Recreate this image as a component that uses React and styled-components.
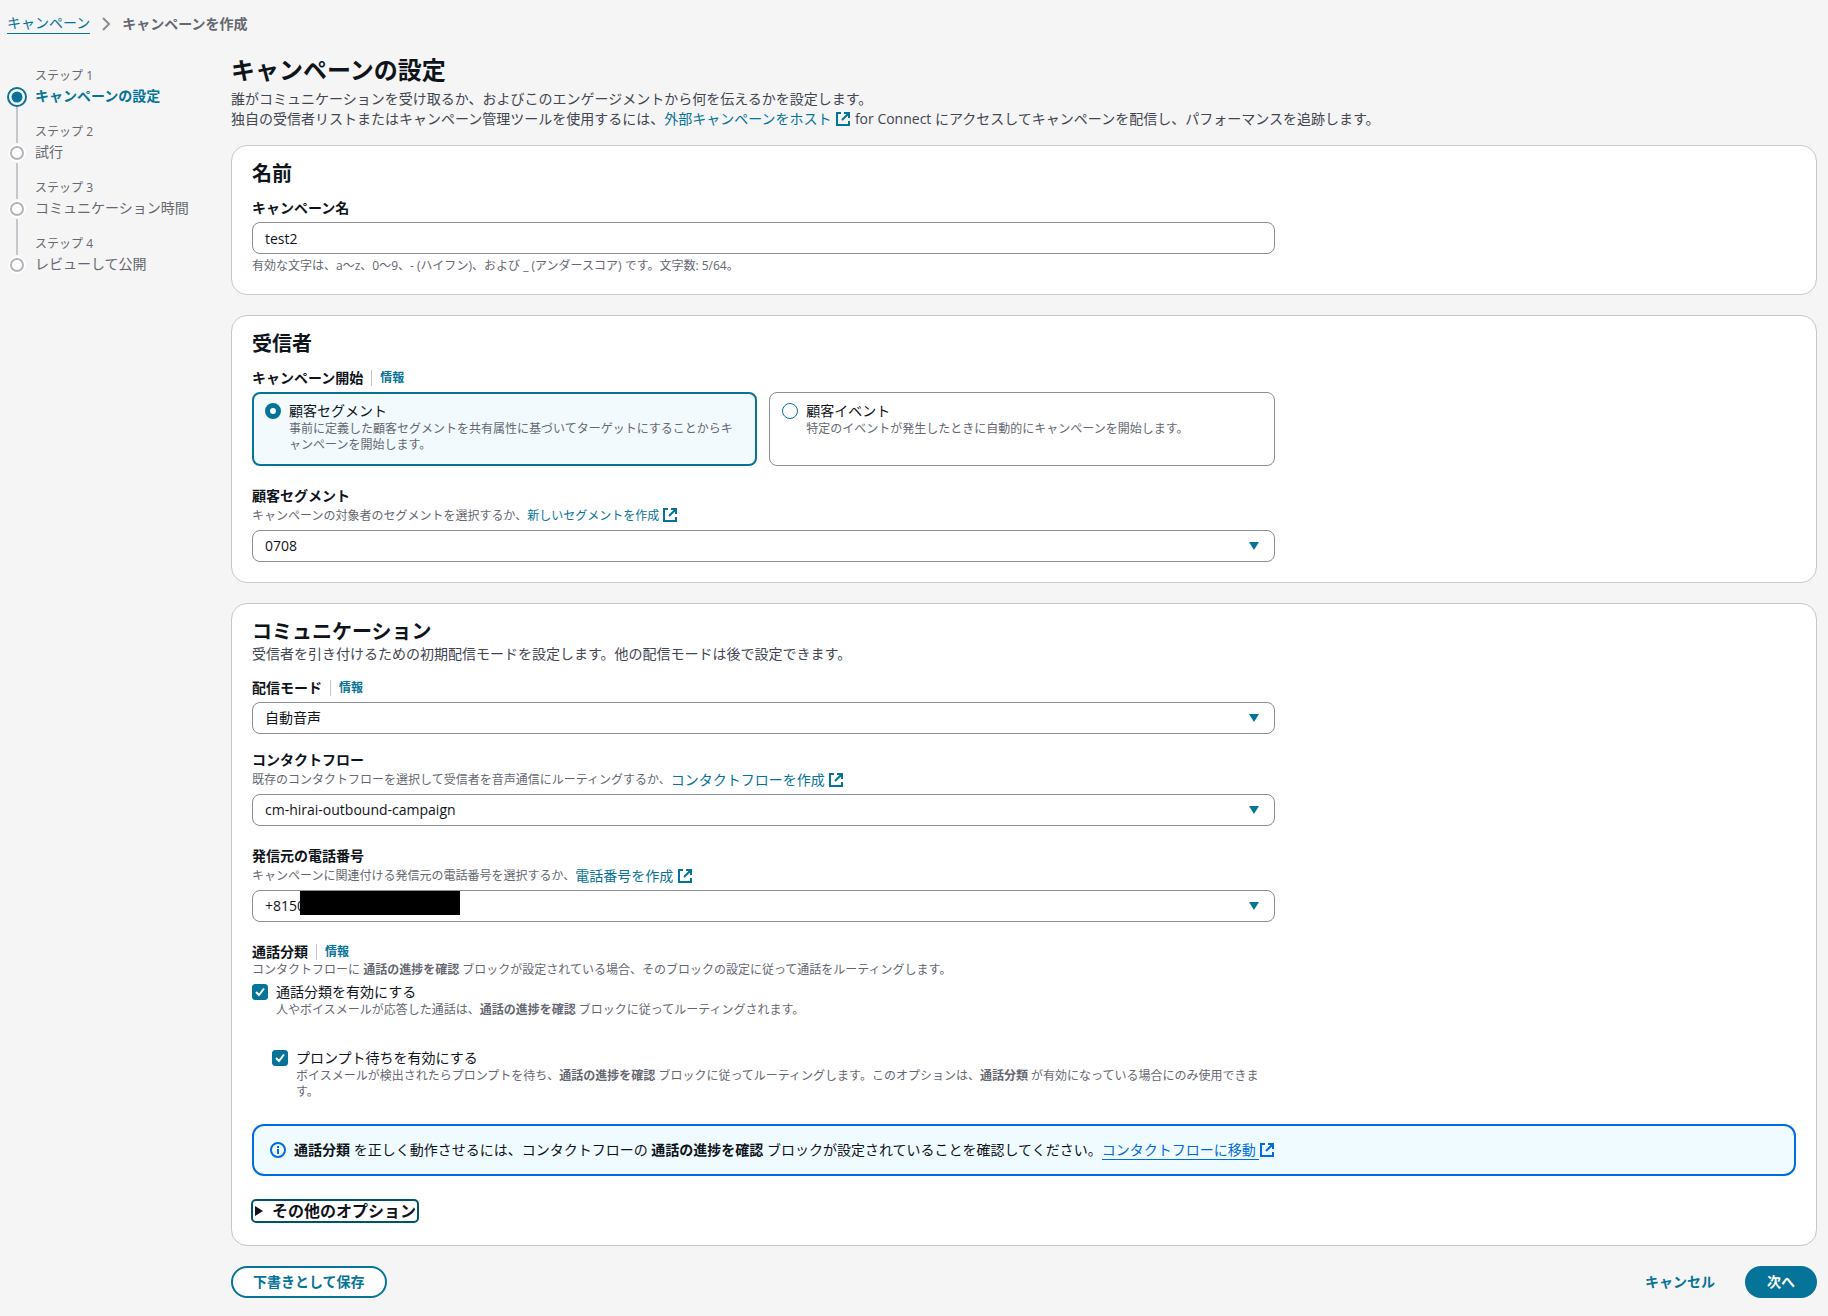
import React, { useState } from 'react';
import styled, { createGlobalStyle, css } from 'styled-components';

const teal = '#067398';
const blue = '#006ce0';
const dark = '#0f141a';
const body = '#424650';
const grey = '#656871';
const line = '#c6c6cd';

const GlobalStyle = createGlobalStyle`
    * {
        box-sizing: border-box;
    }
    body {
        margin: 0;
        background: #f5f5f5;
        color: ${dark};
        font-family: 'Open Sans', 'Noto Sans CJK JP', sans-serif;
        font-size: 14px;
        line-height: 20px;
    }
    button, input, select {
        font: inherit;
        color: inherit;
    }
    h1, h2, p, ol, fieldset {
        margin: 0;
        padding: 0;
        border: 0;
    }
`
const Page = styled.div`
    padding: 13px 11px 17px 7px;
`
const Breadcrumbs = styled.nav`
    display: flex;
    align-items: center;
    gap: 8px;
    color: ${grey};
    a {
        color: ${teal};
        text-decoration: none;
        border-bottom: 1px solid ${teal};
    }
`
const Columns = styled.div`
    display: grid;
    grid-template-columns: 184px minmax(0, 1fr);
    gap: 40px;
    margin-top: 21px;
`
const Steps = styled.ol`
    list-style: none;
    padding-top: 11px;
`
const Step = styled.li`
    display: grid;
    grid-template-columns: 20px 1fr;
    grid-template-rows: 20px 20px;
    column-gap: 8px;
    height: 56px;
    color: ${grey};
`
const StepNumber = styled.span`
    grid-column: 2;
    font-size: 12px;
`
const StepTitle = styled.span`
    grid-column: 2;
    grid-row: 2;
    ${p => p.$active && css`
        color: ${teal};
        font-weight: 700;
    `}
`
const StepMarker = styled.span`
    grid-column: 1;
    grid-row: 2;
    display: flex;
    flex-direction: column;
    align-items: center;
    height: 56px;
    margin-top: 1px;
    svg {
        flex: none;
    }
`
const StepLine = styled.span`
    width: 2px;
    height: 36px;
    background: ${line};
`
const Content = styled.main`
    display: flex;
    flex-direction: column;
    gap: 20px;
`
const Title = styled.h1`
    font-size: 24px;
    line-height: 30px;
    margin-bottom: 4px;
`
const Intro = styled.header`
    color: ${body};
    margin-bottom: -4px;
    h1 {
        color: ${dark};
    }
    p {
        height: 20px;
    }
`
const Card = styled.section`
    display: flex;
    flex-direction: column;
    padding: 16px 20px 20px;
    background: #fff;
    border: 1px solid ${line};
    border-radius: 16px;
`
const CardTitle = styled.h2`
    font-size: 20px;
    line-height: 24px;
`
const CardText = styled.p`
    margin-bottom: 2px;
    color: ${body};
`
const Form = styled.div`
    display: grid;
    grid-template-columns: repeat(12, minmax(0, 1fr));
    column-gap: 20px;
    margin-top: 12px;
`
const Fields = styled.div`
    grid-column: span 8;
    display: flex;
    flex-direction: column;
    gap: 20px;
`
const FieldPair = styled.div`
    display: flex;
    flex-direction: column;
    gap: 16px;
`
const FieldHead = styled.div`
    display: flex;
    align-items: center;
    font-weight: 700;
`
const Info = styled.a`
    margin-left: 8px;
    padding-left: 8px;
    border-left: 1px solid ${line};
    color: ${teal};
    font-size: 12px;
    line-height: 16px;
    text-decoration: none;
`
const Hint = styled.p`
    color: ${grey};
    font-size: 12px;
    line-height: 16px;
`
const LinkHint = styled(Hint)`
    display: flex;
    align-items: center;
    line-height: 20px;
`
const Link = styled.a`
    color: ${teal};
    font-size: ${p => (p.$small ? '12px' : '14px')};
    text-decoration: none;
`
const controlBox = css`
    display: block;
    width: 100%;
    height: 32px;
    padding: 0 12px;
    border: 1px solid #8c8c94;
    border-radius: 8px;
    background: #fff;
`
const TextInput = styled.input`
    ${controlBox}
    margin: 4px 0;
`
const SelectWrap = styled.div`
    position: relative;
    margin-top: 4px;
    select {
        ${controlBox}
        appearance: none;
    }
`
const Caret = styled.svg`
    position: absolute;
    right: 16px;
    top: 12px;
    pointer-events: none;
`
const Redaction = styled.span`
    position: absolute;
    left: 48px;
    top: 1px;
    width: 160px;
    height: 24px;
    background: #000;
`
const Tiles = styled.div`
    display: grid;
    grid-template-columns: 1fr 1fr;
    gap: 12px;
    margin-top: 4px;
`
const Tile = styled.label`
    display: grid;
    grid-template-columns: 16px 1fr;
    column-gap: 8px;
    align-content: start;
    padding: 8px 12px 12px;
    border-radius: 8px;
    border: 1px solid #8c8c94;
    ${p => p.$checked && css`
        padding: 7px 11px 11px;
        border: 2px solid ${teal};
        background: #f2fafd;
    `}
`
const Radio = styled.input`
    appearance: none;
    width: 16px;
    height: 16px;
    margin: 2px 0;
    border: 1px solid ${teal};
    border-radius: 50%;
    background: #fff;
    &:checked {
        border-width: 5px;
    }
`
const OptionText = styled.span`
    color: ${dark};
`
const OptionHint = styled.span`
    grid-column: 2;
    color: ${grey};
    font-size: 12px;
    line-height: 16px;
`
const CheckRow = styled.label`
    display: grid;
    grid-template-columns: 16px 1fr;
    column-gap: 8px;
    margin-top: ${p => (p.$nested ? '30px' : '4px')};
    margin-left: ${p => (p.$nested ? '20px' : '0')};
`
const CheckBox = styled.span`
    display: grid;
    height: 16px;
    margin-top: 2px;
    input, svg {
        grid-area: 1 / 1;
    }
    input {
        appearance: none;
        width: 16px;
        height: 16px;
        margin: 0;
        border: 1px solid #8c8c94;
        border-radius: 3px;
    }
    input:checked {
        border-color: ${teal};
        background: ${teal};
    }
    svg {
        pointer-events: none;
    }
`
const Alert = styled.div`
    display: flex;
    align-items: center;
    gap: 8px;
    margin-top: 24px;
    padding: 14px 16px;
    border: 2px solid ${blue};
    border-radius: 12px;
    background: #f0fbff;
`
const AlertLink = styled.a`
    color: ${blue};
    text-decoration: none;
    span {
        border-bottom: 1px solid ${blue};
    }
`
const Expander = styled.button`
    display: flex;
    align-items: center;
    align-self: flex-start;
    gap: 8px;
    margin: 23px 0 2px -1px;
    padding: 0 1px;
    border: 2px solid #00536f;
    border-radius: 5px;
    background: none;
    font-size: 16px;
    font-weight: 700;
`
const Footer = styled.footer`
    display: flex;
    justify-content: space-between;
`
const Actions = styled.div`
    display: flex;
    gap: 8px;
`
const Button = styled.button`
    height: 32px;
    padding: 0 20px;
    border: 2px solid ${p => (p.$kind === 'link' ? 'transparent' : teal)};
    border-radius: 20px;
    background: ${p => ({ primary: teal, link: 'transparent' }[p.$kind] || '#fff')};
    color: ${p => (p.$kind === 'primary' ? '#fff' : teal)};
    font-weight: 700;
`
const Icon = styled.svg`
    width: 16px;
    height: 16px;
    flex: none;
    fill: none;
    stroke: currentColor;
    stroke-width: 2;
    vertical-align: -3px;
`

const External = () => (
    <Icon viewBox="0 0 16 16" aria-hidden="true">
        <path d="M6 2H2v12h12v-4M9 2h5v5M14 2L7 9" />
    </Icon>
)

const Check = () => (
    <svg width="16" height="16" viewBox="0 0 16 16" fill="none" stroke="#fff" strokeWidth="2" aria-hidden="true">
        <path d="M4 8l3 3 5-6.500" />
    </svg>
)

const Marker = ({ active }) => (
    active
        ? <svg width="20" height="20" viewBox="0 0 20 20">
            <circle cx="10" cy="10" r="9" fill="#fff" stroke={teal} strokeWidth="2" />
            <circle cx="10" cy="10" r="5.500" fill={teal} />
        </svg>
        : <svg width="20" height="20" viewBox="0 0 20 20">
            <circle cx="10" cy="10" r="9" fill="#fff" />
            <circle cx="10" cy="10" r="6" fill="#fff" stroke="#b4b4bb" strokeWidth="2" />
        </svg>
)

const steps = ['キャンペーンの設定', '試行', 'コミュニケーション時間', 'レビューして公開']

const Head = ({ id, label, info }) => (
    <FieldHead>
        <label htmlFor={id}>{label}</label>
        {info && <Info href="#info">情報</Info>}
    </FieldHead>
)

const SelectField = ({ id, label, info, hint, value, redacted }) => (
    <div>
        <Head id={id} label={label} info={info} />
        {hint && <LinkHint>{hint}</LinkHint>}
        <SelectWrap>
            <select id={id} defaultValue={value}>
                <option value={value}>{value}</option>
            </select>
            <Caret width="10" height="8" viewBox="0 0 10 8" aria-hidden="true">
                <path d="M0 0h10L5 8z" fill={teal} />
            </Caret>
            {redacted && <Redaction />}
        </SelectWrap>
    </div>
)

const App = () => {
    const [start, setStart] = useState('segment')

    return (
        <Page>
            <GlobalStyle />
            <Breadcrumbs>
                <a href="#campaigns">キャンペーン</a>
                <Icon viewBox="0 0 16 16" aria-hidden="true" color="#8c8c94">
                    <path d="M5 2l6 6-6 6" />
                </Icon>
                <strong>キャンペーンを作成</strong>
            </Breadcrumbs>
            <Columns>
                <Steps>
                    {steps.map((title, i) => (
                        <Step key={title}>
                            <StepNumber>ステップ {i + 1}</StepNumber>
                            <StepMarker>
                                <Marker active={i === 0} />
                                {i < steps.length - 1 && <StepLine />}
                            </StepMarker>
                            <StepTitle $active={i === 0}>{title}</StepTitle>
                        </Step>
                    ))}
                </Steps>
                <Content>
                    <Intro>
                        <Title>キャンペーンの設定</Title>
                        <p>誰がコミュニケーションを受け取るか、およびこのエンゲージメントから何を伝えるかを設定します。</p>
                        <p>
                            独自の受信者リストまたはキャンペーン管理ツールを使用するには、<Link href="#host">外部キャンペーンをホスト <External /></Link> for Connect にアクセスしてキャンペーンを配信し、パフォーマンスを追跡します。
                        </p>
                    </Intro>

                    <Card>
                        <CardTitle>名前</CardTitle>
                        <Form>
                            <Fields>
                                <div>
                                    <Head id="name" label="キャンペーン名" />
                                    <TextInput id="name" type="text" defaultValue="test2" />
                                    <Hint>有効な文字は、a～z、0～9、- (ハイフン)、および _ (アンダースコア) です。文字数: 5/64。</Hint>
                                </div>
                            </Fields>
                        </Form>
                    </Card>

                    <Card>
                        <CardTitle>受信者</CardTitle>
                        <Form>
                            <Fields>
                                <div role="radiogroup" aria-labelledby="start">
                                    <FieldHead>
                                        <span id="start">キャンペーン開始</span>
                                        <Info href="#info">情報</Info>
                                    </FieldHead>
                                    <Tiles>
                                        <Tile $checked={start === 'segment'}>
                                            <Radio type="radio" name="start" checked={start === 'segment'} onChange={() => setStart('segment')} />
                                            <OptionText>顧客セグメント</OptionText>
                                            <OptionHint>事前に定義した顧客セグメントを共有属性に基づいてターゲットにすることからキャンペーンを開始します。</OptionHint>
                                        </Tile>
                                        <Tile $checked={start === 'event'}>
                                            <Radio type="radio" name="start" checked={start === 'event'} onChange={() => setStart('event')} />
                                            <OptionText>顧客イベント</OptionText>
                                            <OptionHint>特定のイベントが発生したときに自動的にキャンペーンを開始します。</OptionHint>
                                        </Tile>
                                    </Tiles>
                                </div>
                                <SelectField
                                    id="segment"
                                    label="顧客セグメント"
                                    hint={<>キャンペーンの対象者のセグメントを選択するか、<Link $small href="#segment-new">新しいセグメントを作成 <External /></Link></>}
                                    value="0708"
                                />
                            </Fields>
                        </Form>
                    </Card>

                    <Card>
                        <CardTitle>コミュニケーション</CardTitle>
                        <CardText>受信者を引き付けるための初期配信モードを設定します。他の配信モードは後で設定できます。</CardText>
                        <Form>
                            <Fields>
                                <FieldPair>
                                    <SelectField id="mode" label="配信モード" info value="自動音声" />
                                    <SelectField
                                        id="flow"
                                        label="コンタクトフロー"
                                        hint={<>既存のコンタクトフローを選択して受信者を音声通信にルーティングするか、<Link href="#flow-new">コンタクトフローを作成 <External /></Link></>}
                                        value="cm-hirai-outbound-campaign"
                                    />
                                </FieldPair>
                                <SelectField
                                    id="phone"
                                    label="発信元の電話番号"
                                    hint={<>キャンペーンに関連付ける発信元の電話番号を選択するか、<Link href="#phone-new">電話番号を作成 <External /></Link></>}
                                    value="+8150"
                                    redacted
                                />
                                <div>
                                    <FieldHead>
                                        <span>通話分類</span>
                                        <Info href="#info">情報</Info>
                                    </FieldHead>
                                    <Hint>コンタクトフローに <b>通話の進捗を確認</b> ブロックが設定されている場合、そのブロックの設定に従って通話をルーティングします。</Hint>
                                    <CheckRow>
                                        <CheckBox><input type="checkbox" defaultChecked /><Check /></CheckBox>
                                        <OptionText>通話分類を有効にする</OptionText>
                                        <OptionHint>人やボイスメールが応答した通話は、<b>通話の進捗を確認</b> ブロックに従ってルーティングされます。</OptionHint>
                                    </CheckRow>
                                    <CheckRow $nested>
                                        <CheckBox><input type="checkbox" defaultChecked /><Check /></CheckBox>
                                        <OptionText>プロンプト待ちを有効にする</OptionText>
                                        <OptionHint>ボイスメールが検出されたらプロンプトを待ち、<b>通話の進捗を確認</b> ブロックに従ってルーティングします。このオプションは、<b>通話分類</b> が有効になっている場合にのみ使用できます。</OptionHint>
                                    </CheckRow>
                                </div>
                            </Fields>
                        </Form>
                        <Alert>
                            <Icon viewBox="0 0 16 16" aria-hidden="true" color={blue}>
                                <circle cx="8" cy="8" r="7" />
                                <path d="M8 4v2M8 7v5" />
                            </Icon>
                            <div>
                                <b>通話分類</b> を正しく動作させるには、コンタクトフローの <b>通話の進捗を確認</b> ブロックが設定されていることを確認してください。<AlertLink href="#flow"><span>コンタクトフローに移動 </span><External /></AlertLink>
                            </div>
                        </Alert>
                        <Expander type="button" aria-expanded="false">
                            <svg width="10" height="10" viewBox="0 0 10 10" aria-hidden="true">
                                <path d="M1 0l8 5-8 5z" fill={dark} />
                            </svg>
                            その他のオプション
                        </Expander>
                    </Card>

                    <Footer>
                        <Button type="button">下書きとして保存</Button>
                        <Actions>
                            <Button type="button" $kind="link">キャンセル</Button>
                            <Button type="button" $kind="primary">次へ</Button>
                        </Actions>
                    </Footer>
                </Content>
            </Columns>
        </Page>
    )
}

export default App
